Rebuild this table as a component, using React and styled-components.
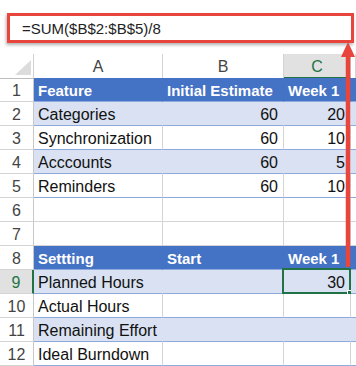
import React from "react";
import styled, { createGlobalStyle, css } from "styled-components";

const GlobalStyle = createGlobalStyle`
  html, body {
    margin: 0;
    padding: 0;
    background: #ffffff;
    overflow: hidden;
  }
  body {
    font-family: "Liberation Sans", Arial, sans-serif;
  }
`;

const COLS = "34px 129px 121px 67px 1fr";
const GREEN = "#217346";
const RED = "#e8463d";

const Wrapper = styled.div`
  position: relative;
  width: 356px;
  height: 366px;
  overflow: hidden;
`;

const FormulaArea = styled.div`
  height: 54px;
  padding: 13px 2px 0 7px;
  box-sizing: border-box;
`;

const FormulaBox = styled.div`
  width: 347px;
  height: 30px;
  box-sizing: border-box;
  border: 3px solid ${RED};
  box-shadow: -1px 2px 3px rgba(0, 0, 0, 0.3);
  display: flex;
  align-items: center;
  padding-left: 12px;
  font-size: 15px;
  color: #222;
  background: #fff;
`;

const Row = styled.div`
  display: grid;
  grid-template-columns: ${COLS};
  height: 24px;
`;

const Corner = styled.div`
  position: relative;
  border-right: 1px solid #d0d0d0;
  border-bottom: 1px solid #bdbdbd;
  &::after {
    content: "";
    position: absolute;
    right: 2px;
    bottom: 3px;
    width: 0;
    height: 0;
    border-left: 16px solid transparent;
    border-bottom: 15px solid #dcdcdc;
  }
`;

const ColHead = styled.div`
  box-sizing: border-box;
  text-align: center;
  font-size: 16px;
  line-height: 20px;
  padding-top: 3px;
  color: #444;
  border-right: 1px solid #d4d4d4;
  border-bottom: 1px solid #bdbdbd;
  ${(p) =>
    p.$active &&
    css`
      background: #e1e1e1;
      color: ${GREEN};
      border-bottom: 2px solid ${GREEN};
      border-right-color: #c8c8c8;
    `}
`;

const RowHead = styled.div`
  box-sizing: border-box;
  text-align: center;
  font-size: 16px;
  line-height: 20px;
  padding-top: 3px;
  color: #444;
  border-right: 1px solid #c8c8c8;
  border-bottom: 1px solid #d4d4d4;
  ${(p) =>
    p.$active &&
    css`
      background: #e1e1e1;
      color: ${GREEN};
      border-right: 2px solid ${GREEN};
    `}
`;

const fills = {
  head: "#4472c4",
  band: "#d9e1f2",
  plain: "#ffffff",
  empty: "#ffffff",
};

const Cell = styled.div`
  position: relative;
  box-sizing: border-box;
  padding: 3px 4px 0 4px;
  font-size: 16px;
  line-height: 20px;
  white-space: nowrap;
  overflow: visible;
  color: #111;
  background: ${(p) => fills[p.$kind]};
  text-align: ${(p) => (p.$num ? "right" : "left")};
  padding-right: ${(p) => (p.$num ? "5px" : "4px")};
  border-right: 1px solid
    ${(p) => (p.$kind === "plain" || p.$kind === "empty" ? "#d4d4d4" : fills[p.$kind])};
  border-bottom: 1px solid ${(p) => (p.$kind === "empty" ? "#d4d4d4" : "#8ea9db")};
  ${(p) =>
    p.$kind === "head" &&
    css`
      color: #ffffff;
      font-weight: bold;
      font-size: 15px;
    `}
  ${(p) =>
    p.$selected &&
    css`
      &::before {
        content: "";
        position: absolute;
        left: -2px;
        top: -2px;
        right: -1px;
        bottom: -1px;
        border: 2px solid ${GREEN};
      }
      &::after {
        content: "";
        position: absolute;
        right: -4px;
        bottom: -4px;
        width: 5px;
        height: 5px;
        background: ${GREEN};
        border: 1px solid #fff;
      }
    `}
`;

const Arrow = styled.svg`
  position: absolute;
  left: 340px;
  top: 42px;
`;

const rows = [
  { n: 1, kind: "head", cells: ["Feature", "Initial Estimate", "Week 1"] },
  { n: 2, kind: "band", cells: ["Categories", "60", "20"] },
  { n: 3, kind: "plain", cells: ["Synchronization", "60", "10"] },
  { n: 4, kind: "band", cells: ["Acccounts", "60", "5"] },
  { n: 5, kind: "plain", cells: ["Reminders", "60", "10"] },
  { n: 6, kind: "empty", cells: ["", "", ""] },
  { n: 7, kind: "empty", cells: ["", "", ""] },
  { n: 8, kind: "head", cells: ["Settting", "Start", "Week 1"] },
  { n: 9, kind: "band", cells: ["Planned Hours", "", "30"], active: true },
  { n: 10, kind: "plain", cells: ["Actual Hours", "", ""] },
  { n: 11, kind: "band", cells: ["Remaining Effort", "", ""] },
  { n: 12, kind: "plain", cells: ["Ideal Burndown", "", ""] },
];

const isNum = (v) => v !== "" && !isNaN(Number(v));

const App = () => {
  return (
    <Wrapper>
      <GlobalStyle />
      <FormulaArea>
        <FormulaBox>=SUM($B$2:$B$5)/8</FormulaBox>
      </FormulaArea>

      <Row>
        <Corner />
        <ColHead>A</ColHead>
        <ColHead>B</ColHead>
        <ColHead $active>C</ColHead>
        <ColHead />
      </Row>

      {rows.map((r) => (
        <Row key={r.n}>
          <RowHead $active={r.active}>{r.n}</RowHead>
          {r.cells.map((v, i) => (
            <Cell
              key={i}
              $kind={r.kind}
              $num={isNum(v)}
              $selected={r.active && i === 2}
            >
              {v}
            </Cell>
          ))}
          <Cell $kind={r.kind === "empty" ? "empty" : r.kind} />
        </Row>
      ))}

      {/* red pointer from the active cell up to the formula bar */}
      <Arrow width="16" height="228" viewBox="0 0 16 228">
        <line x1="8" y1="12" x2="8" y2="223" stroke={RED} strokeWidth="4.5" strokeLinecap="round" />
        <polygon points="8,0 1,15 15,15" fill={RED} />
      </Arrow>
    </Wrapper>
  );
};

export default App;
